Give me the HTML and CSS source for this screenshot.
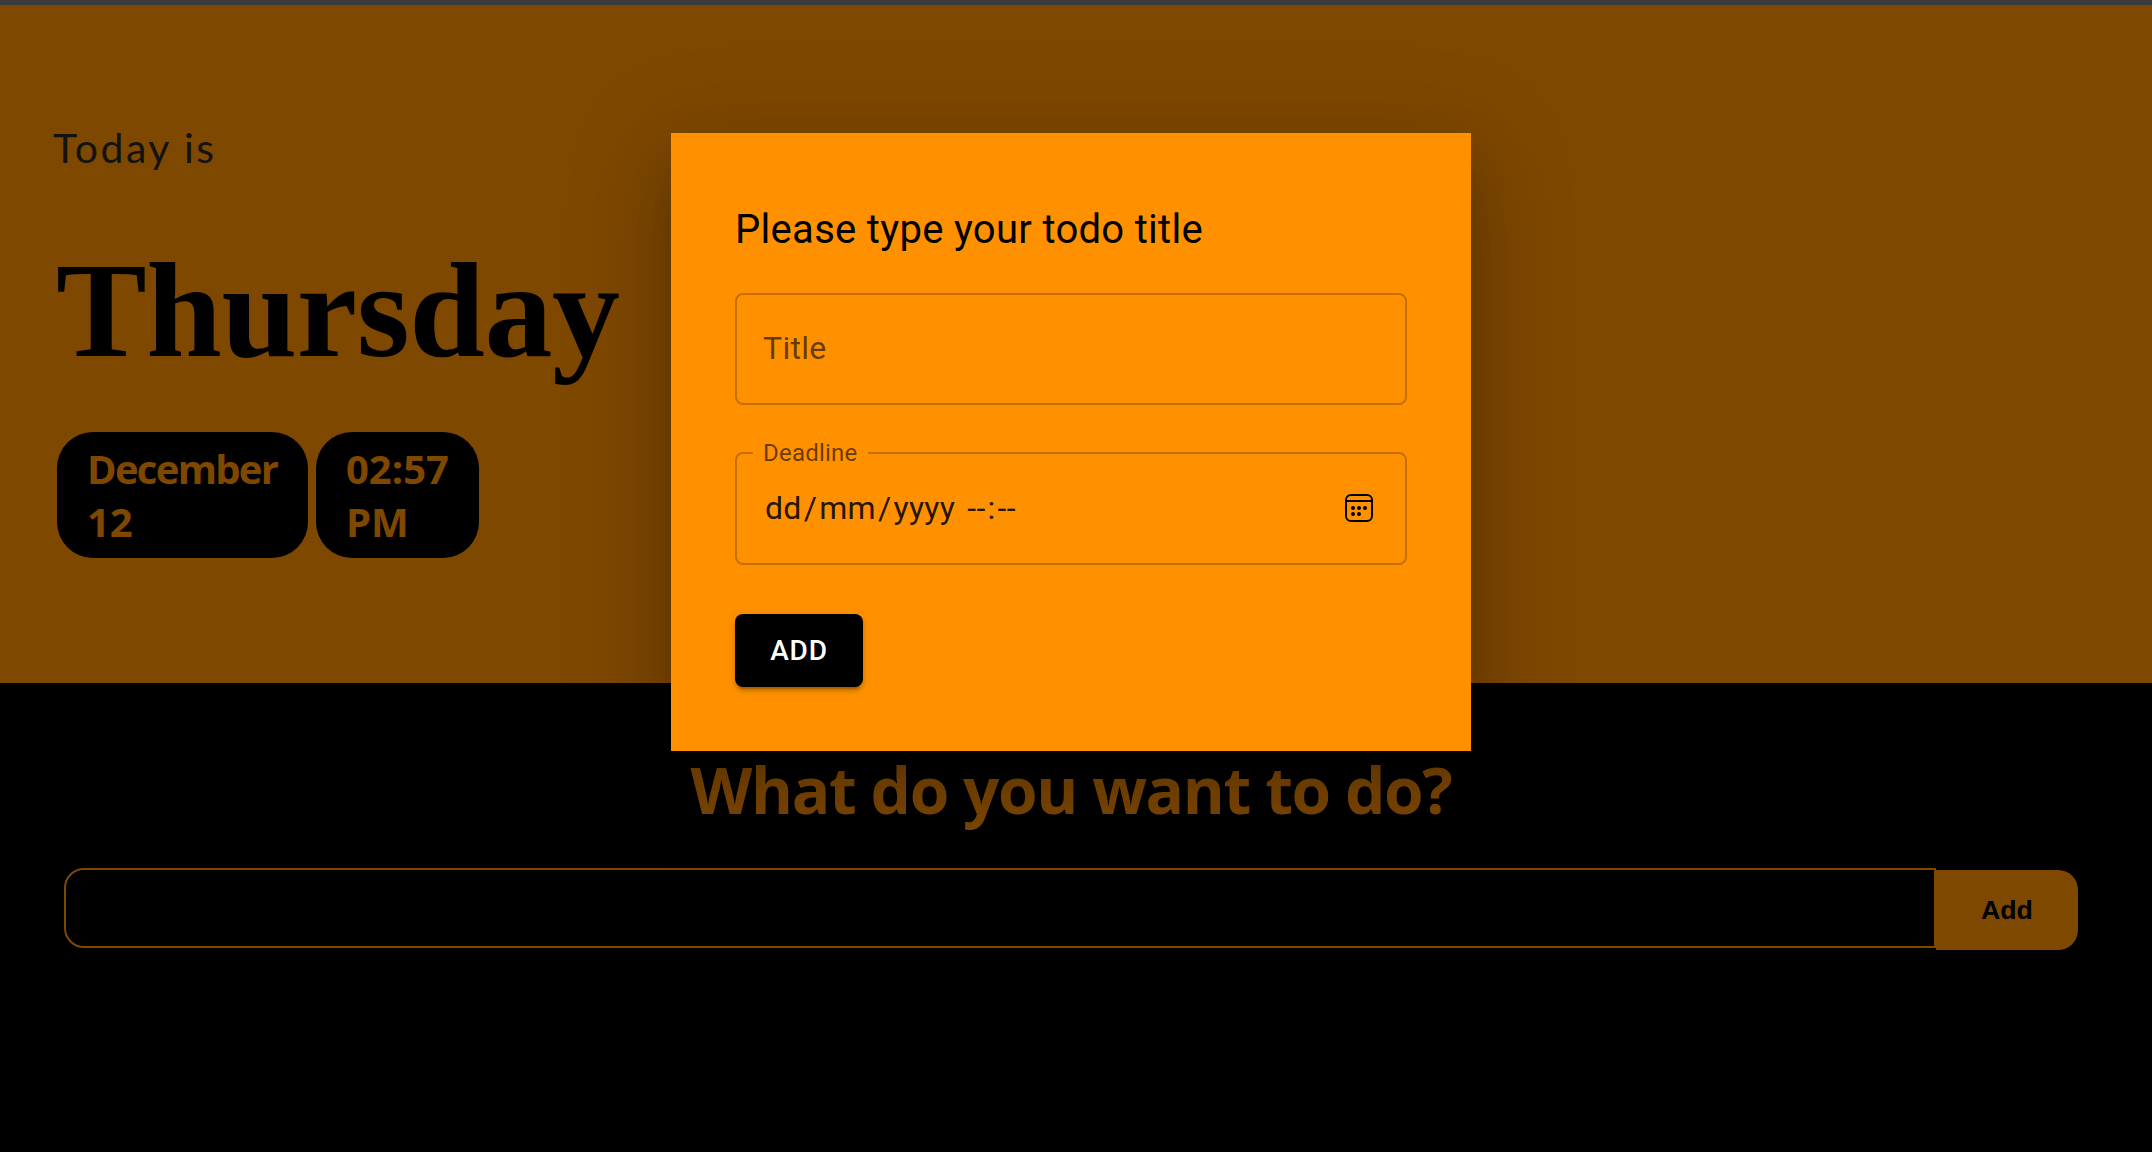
FILE: index.html
```html
<!DOCTYPE html>
<html lang="en">
<head>
<meta charset="utf-8">
<title>Todo</title>
<link rel="stylesheet" href="styles.css">
</head>
<body>
<div class="top-strip"></div>
<div class="app">
  <header class="hero">
    <p class="today">Today is</p>
    <h1 class="weekday">Thursday</h1>
    <div class="chips">
      <span class="chip chip-date"><span class="month">December</span><br>12</span>
      <span class="chip chip-time">02:57<br>PM</span>
    </div>
  </header>
  <main class="todo">
    <h2 class="question">What do you want to do?</h2>
    <form class="todo-form">
      <input class="todo-input" type="text" aria-label="Todo">
      <button class="todo-add" type="button">Add</button>
    </form>
  </main>
  <div class="backdrop">
    <section class="modal" role="dialog">
      <h3 class="modal-title">Please type your todo title</h3>
      <div class="field"><span class="placeholder">Title</span></div>
      <fieldset class="field field-date">
        <legend class="notch">Deadline</legend>
        <span class="date-value"><span>dd<i class="sep">/</i>mm<i class="sep">/</i>yyyy</span><span class="time-value">--<i class="sep">:</i>--</span></span>
        <svg class="calendar" viewBox="0 0 28 28" width="28" height="28">
          <rect x="1" y="1" width="26" height="26" rx="5" fill="none" stroke="#000" stroke-width="2"/>
          <path d="M1 7h26" stroke="#000" stroke-width="2"/>
          <circle cx="8" cy="14" r="2"/><circle cx="14" cy="14" r="2"/><circle cx="20" cy="14" r="2"/>
          <circle cx="8" cy="20" r="2"/><circle cx="14" cy="20" r="2"/>
        </svg>
      </fieldset>
      <button class="modal-add" type="button">ADD</button>
    </section>
  </div>
</div>
</body>
</html>
```
FILE: styles.css
```css
* { box-sizing: border-box; }

body {
  margin: 0;
  height: 1152px;
  overflow: hidden;
  background: #000;
  display: flex;
  flex-direction: column;
}

.top-strip { height: 5px; background: #3b3b3b; flex: none; }

.app { position: relative; flex: 1; display: flex; flex-direction: column; }

.hero {
  height: 678px;
  padding: 115px 54px 0;
  background: #ff9100;
}

.today {
  margin: 0 0 0 -1px;
  height: 56px;
  font: 400 41px/56px Lato, sans-serif;
  letter-spacing: 2.5px;
  color: #262626;
}

.weekday {
  margin: 56px 0 0 2px;
  font: 700 136px/156px "Liberation Serif", "Times New Roman", serif;
  letter-spacing: -.4px;
  color: #000;
}

.chips {
  display: flex;
  gap: 8px;
  margin: 44px 0 0 3px;
}

.chip {
  height: 126px;
  padding: 10px 0 10px 30px;
  border-radius: 36px;
  background: #000;
  color: #ff9100;
  font: 700 40px/53px "Open Sans", sans-serif;
}
.chip-date { width: 251px; }
.chip-time { width: 163px; }
.month { letter-spacing: -1.7px; }

.todo { padding: 64px 74px 0 64px; }

.question {
  margin: 0;
  height: 86px;
  font: 700 64px/86px "Open Sans", sans-serif;
  letter-spacing: -1.4px;
  text-align: center;
  white-space: nowrap;
  color: #ff9100;
}

.todo-form { display: flex; margin-top: 35px; }

.todo-input {
  width: 1872px;
  height: 80px;
  border: 2px solid #ff9100;
  border-radius: 20px 0 0 20px;
  background: #000;
}

.todo-add {
  width: 142px;
  height: 80px;
  margin-top: 2px;
  padding: 0;
  border: 0;
  border-radius: 0 20px 20px 0;
  background: #ff9100;
  color: #000;
  font: 700 26.66px/78px "Liberation Sans", Arial, sans-serif;
}

/* Dialog layer */
.backdrop {
  position: absolute;
  inset: 0;
  display: flex;
  align-items: flex-start;
  padding: 128px 0 0 671px;
  background: rgba(0, 0, 0, .5);
}

.modal {
  width: 800px;
  height: 618px;
  padding: 64px;
  background: #ff9100;
  font-family: Roboto, sans-serif;
  box-shadow:
    0 22px 30px -14px rgba(0, 0, 0, .2),
    0 48px 76px 6px rgba(0, 0, 0, .14),
    0 18px 92px 16px rgba(0, 0, 0, .12);
}

.modal-title {
  margin: 0 0 31px;
  padding-top: 1px;
  font-weight: 400;
  font-size: 40px;
  line-height: 64px;
  letter-spacing: .3px;
  color: #000;
}

.field {
  display: flex;
  align-items: center;
  height: 112px;
  margin: 0;
  padding: 0 32px 3px 26px;
  border: 2px solid rgba(0, 0, 0, .23);
  border-radius: 8px;
  font-size: 32px;
  letter-spacing: .3px;
}

.placeholder { color: rgba(0, 0, 0, .6); }

.field-date {
  height: 123px;
  margin-top: 37px;
  padding: 0 32px 11px 16px;
  justify-content: space-between;
}

.notch {
  height: 22px;
  padding: 0 10px;
  font-size: 24px;
  line-height: 22px;
  letter-spacing: .225px;
  color: rgba(0, 0, 0, .6);
}

.date-value { display: flex; gap: 12px; padding-left: 12px; color: rgba(0, 0, 0, .87); }

.sep { font-style: normal; margin: 0 2px; }

.modal-add {
  display: block;
  width: 128px;
  height: 73px;
  margin-top: 49px;
  padding: 0;
  border: 0;
  border-radius: 8px;
  background: #000;
  color: #fff;
  font: 500 28px/73px Roboto, sans-serif;
  letter-spacing: .8px;
  box-shadow:
    0 6px 2px -4px rgba(0, 0, 0, .2),
    0 4px 4px 0 rgba(0, 0, 0, .14),
    0 2px 10px 0 rgba(0, 0, 0, .12);
}
```
